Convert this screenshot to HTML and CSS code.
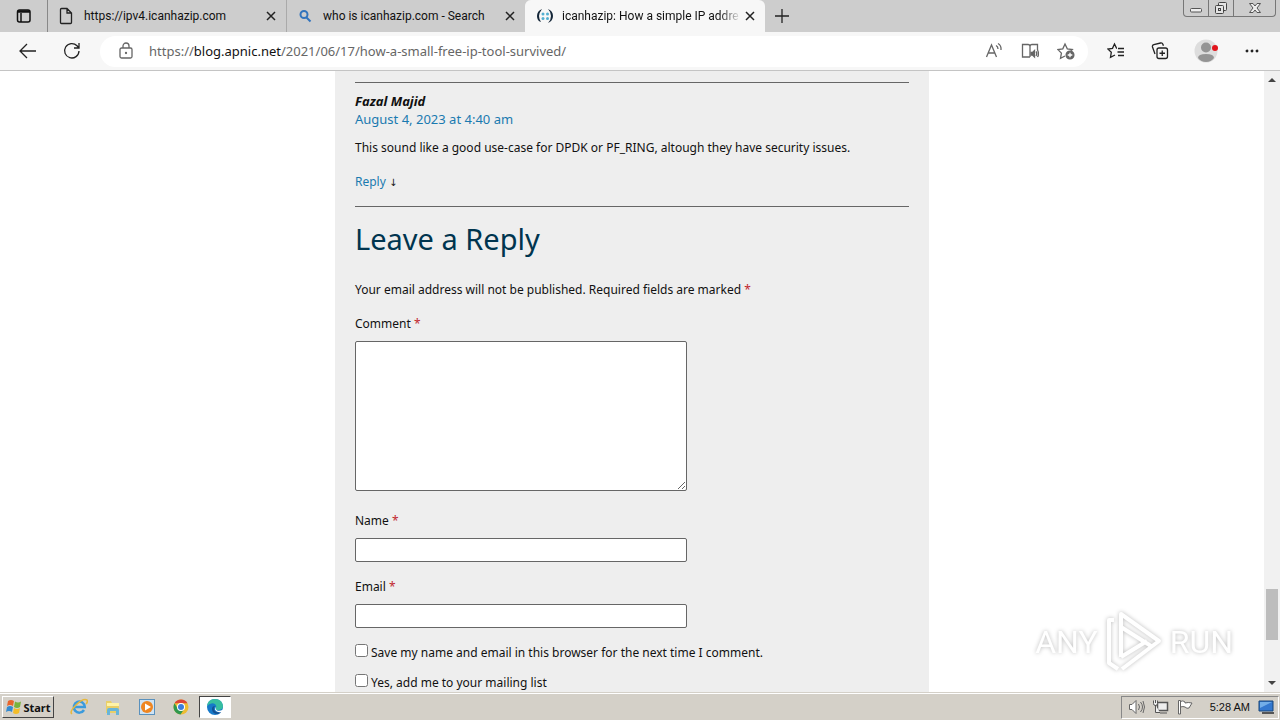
FILE: index.html
```html
<!doctype html>
<html lang="en">
<head>
  <meta charset="utf-8">
  <title>icanhazip: How a simple IP address tool survived</title>
  <meta name="viewport" content="width=device-width, initial-scale=1">
  <link rel="stylesheet" href="styles.css">
</head>

<body>
  <header class="tabbar">
    <button type="button" class="tab-actions" aria-label="Tab actions">
      <svg width="16" height="16" viewBox="0 0 16 16" fill="none" stroke="#111" stroke-width="1.5"><rect x="1.5" y="2" width="12.500" height="12" rx="2"/><path d="M2 3.500h12" stroke-width="2.500"/><path d="M5 5v9"/></svg>
    </button>
    <div class="tab tab-first">
      <svg width="16" height="18" viewBox="0 0 16 18" fill="none" stroke="#222" stroke-width="1.300"><path d="M3.500 1.500h5.500l4.500 4.500v9.500q0 1-1 1h-9q-1 0-1-1v-13q0-1 1-1zM9 1.500v4.500h4.500"/></svg>
      <span class="tab-title">https://ipv4.icanhazip.com</span>
      <button type="button" class="close" aria-label="Close tab"><svg width="10" height="10" viewBox="0 0 10 10"><path d="M1 1l8 8M9 1l-8 8"/></svg></button>
    </div>
    <div class="tab">
      <svg width="16" height="16" viewBox="0 0 16 16" fill="none" stroke="#3274bd" stroke-width="2"><circle cx="7" cy="6.500" r="3.500"/><path d="M9.500 9.500l4 4"/></svg>
      <span class="tab-title">who is icanhazip.com - Search</span>
      <button type="button" class="close" aria-label="Close tab"><svg width="10" height="10" viewBox="0 0 10 10"><path d="M1 1l8 8M9 1l-8 8"/></svg></button>
    </div>
    <div class="tab tab-active">
      <svg width="18" height="16" viewBox="0 0 18 16" fill="none"><path d="M6 1Q1 3 1 8t4 6Q3 11 3 8t3-7zM12 1q3 3 3 7t-3 7q5-2 5-7t-5-7z" fill="#142638"/><g fill="#52aed0"><circle cx="7" cy="6" r="1.500"/><circle cx="11.500" cy="6" r="1.500"/><circle cx="7" cy="10.500" r="1.500"/><circle cx="11.500" cy="10.500" r="1.500"/></g></svg>
      <span class="tab-title tab-fade">icanhazip: How a simple IP addre</span>
      <button type="button" class="close" aria-label="Close tab"><svg width="10" height="10" viewBox="0 0 10 10"><path d="M1 1l8 8M9 1l-8 8"/></svg></button>
    </div>
    <button type="button" class="new-tab" aria-label="New tab">
      <svg width="14" height="14" viewBox="0 0 14 14" stroke="#222" stroke-width="1.300"><path d="M7 0v14M0 7h14"/></svg>
    </button>
    <div class="window-buttons">
      <button type="button" aria-label="Minimize"><svg width="14" height="12" viewBox="0 0 14 12" fill="#eee" stroke="#555"><rect x="1.500" y="6.500" width="11" height="3.500" rx="1"/></svg></button>
      <button type="button" aria-label="Restore"><svg width="14" height="14" viewBox="0 0 14 14" fill="#e4e4e4" stroke="#444"><rect x="4.500" y="1.500" width="8" height="8" rx="1"/><rect x="1.500" y="4.500" width="8" height="8" rx="1"/><rect x="4.500" y="7.500" width="2" height="2"/></svg></button>
      <button type="button" class="window-close" aria-label="Close"><svg width="14" height="12" viewBox="0 0 14 12" fill="#eee" stroke="#555"><path d="M1.500 1.500h3.500l2 2.500 2-2.500h3.500L9 6l3.500 4.500H9L7 8l-2 2.500H1.500L5 6z"/></svg></button>
    </div>
  </header>

  <nav class="toolbar">
    <button type="button" class="tool" aria-label="Back"><svg width="18" height="16" viewBox="0 0 18 16"><path d="M17 8H1.500M8 1L1 8l7 7"/></svg></button>
    <button type="button" class="tool" aria-label="Refresh"><svg width="18" height="18" viewBox="0 0 18 18"><path d="M16 9a7.200 7.200 0 1 1-2-5.200L16 6M16 1v5h-5"/></svg></button>
    <div class="address">
      <svg class="grey-icon" width="16" height="18" viewBox="0 0 16 18"><rect x="2" y="6" width="12" height="10" rx="1.500"/><path d="M5 6V4a3 3 0 0 1 6 0v2"/><circle cx="8" cy="11" r=".5" fill="#666"/></svg>
      <a class="url" href="#">https://<b>blog.apnic.net</b>/2021/06/17/how-a-small-free-ip-tool-survived/</a>
      <button type="button" class="tool grey-icon" aria-label="Read aloud"><svg width="18" height="18" viewBox="0 0 18 18"><path d="M1.500 15L6.500 3l5 12M3.200 11h6.600M11 3.500q2 1 2 3.500M13 1.500q3.500 2 3 6.500"/></svg></button>
      <button type="button" class="tool grey-icon" aria-label="Immersive reader"><svg width="18" height="18" viewBox="0 0 18 18"><path d="M9 15H1.500V2.500H7q2 0 2 2V15M9 4.500q0-2 2-2h5.500V8"/><path d="M10 10.500h1.500l2-2v6.500l-2-2H10z" fill="#666"/><path d="M15 9.500q1.500 2 0 4.500M16.500 8q2 4 0 7"/></svg></button>
      <button type="button" class="tool grey-icon" aria-label="Add to favorites"><svg width="18" height="18" viewBox="0 0 18 18"><path d="M8 14l-4.500 2.300.9-5.200L.8 7.500l5-.7L8 2l2.300 4.800 5 .7-1.500 1.500"/><circle cx="13" cy="13" r="3.900" fill="#666"/><path d="M10.700 13h4.600M13 10.700v4.600" stroke="#fff"/></svg></button>
    </div>
    <button type="button" class="tool" aria-label="Favorites"><svg width="18" height="18" viewBox="0 0 18 18"><path d="M10 6h-.5L7.500 2 5.500 6.300l-4.500.8 3.300 3.200-.8 5L8 13M11 6.500h6M10.500 10H17M11 13.500h6"/></svg></button>
    <button type="button" class="tool" aria-label="Collections"><svg width="18" height="18" viewBox="0 0 18 18"><rect x="6" y="6" width="10.500" height="10.500" rx="2"/><path d="M11.250 8.500v5.500M8.500 11.250H14M4 12L1.500 5q-.5-1.800 1.300-2.300l6.800-1.700q1.700-.3 2.300 1.300l.5 1.500"/></svg></button>
    <button type="button" class="tool profile" aria-label="Profile"><svg width="24" height="24" viewBox="0 0 24 24"><circle cx="12" cy="12" r="11.500" fill="#ddd"/><circle cx="12" cy="8.500" r="5" fill="#949494"/><path d="M4 19q0-4 8-4t8 4q-3 4-8 4t-8-4z" fill="#949494"/><circle cx="21" cy="9" r="3" fill="#e1141c"/></svg></button>
    <button type="button" class="tool" aria-label="Settings and more"><svg width="16" height="6" viewBox="0 0 16 6"><g fill="#222"><circle cx="3" cy="3" r=".8"/><circle cx="8" cy="3" r=".8"/><circle cx="13" cy="3" r=".8"/></g></svg></button>
  </nav>

  <div class="viewport">
    <main class="page">
      <article class="comments">
        <section class="comment">
          <cite>Fazal Majid</cite>
          <a class="comment-date" href="#">August 4, 2023 at 4:40 am</a>
          <p>This sound like a good use-case for DPDK or PF_RING, altough they have security issues.</p>
          <div class="reply"><a href="#">Reply</a> <span class="arrow">↓</span></div>
        </section>
        <form class="respond">
          <h3>Leave a Reply</h3>
          <p class="notes">Your email address will not be published. Required fields are marked <span class="required">*</span></p>
          <label for="comment">Comment <span class="required">*</span></label>
          <textarea id="comment" name="comment"></textarea>
          <label for="author">Name <span class="required">*</span></label>
          <input type="text" id="author" name="author">
          <label for="email">Email <span class="required">*</span></label>
          <input type="text" id="email" name="email">
          <div class="check">
            <input type="checkbox" id="consent">
            <label for="consent">Save my name and email in this browser for the next time I comment.</label>
          </div>
          <div class="check">
            <input type="checkbox" id="mailing">
            <label for="mailing">Yes, add me to your mailing list</label>
          </div>
        </form>
      </article>
    </main>
    <div class="scrollbar">
      <svg width="8" height="4" viewBox="0 0 8 4"><path d="M0 4l4-4 4 4z" fill="#444"/></svg>
      <div class="thumb"></div>
      <svg width="8" height="4" viewBox="0 0 8 4"><path d="M0 0h8l-4 4z" fill="#444"/></svg>
    </div>
    <div class="watermark">
      <span>ANY</span>
      <svg width="60" height="66" viewBox="0 0 60 66" fill="none" stroke="#fff" stroke-width="4" stroke-linejoin="round"><path d="M17 48V5l38 27L18 60M17 18l30 19M17 48l26-16M10 11H5v43l9 6" /></svg>
      <span>RUN</span>
    </div>
  </div>

  <footer class="taskbar">
    <button type="button" class="start">
      <svg width="17" height="16" viewBox="0 0 17 16"><path d="M3 2q3-2 6 0L8 7Q5 5 2 7z" fill="#e8652b"/><path d="M10 2.500q3 2 6 0L15 8q-3 2-6 0z" fill="#79b33b"/><path d="M2 8q3-2 6 0l-1 5q-3-2-6 0z" fill="#338ad0"/><path d="M9 9q3 2 6 0l-1 5q-3 2-6 0z" fill="#f4bd28"/></svg>
      Start
    </button>
    <div class="quick">
      <button type="button" aria-label="Internet Explorer"><svg width="18" height="18" viewBox="0 0 18 18" fill="none"><path d="M14 12a5.500 5.500 0 1 1 .8-3H5" stroke="#3b9bdc" stroke-width="2.500"/><path d="M2 16Q-1 14 6 7T17 2q1 2-1 4" stroke="#e7b83b" stroke-width="1.500"/></svg></button>
      <button type="button" aria-label="Explorer"><svg width="18" height="18" viewBox="0 0 18 18"><path d="M2 3h5l1 2h7v10H2z" fill="#e9cf69"/><path d="M3 5h12v3H3z" fill="#fff3a8"/><path d="M3 17v-5q0-2 2-2h8q2 0 2 2v5h-3v-4H6v4z" fill="#69b5d9"/></svg></button>
      <button type="button" aria-label="Media Player"><svg width="18" height="18" viewBox="0 0 18 18"><rect x="1.500" y="1.500" width="15" height="15" fill="#cfe3f4" stroke="#5a91bd"/><circle cx="9" cy="9" r="6" fill="#ef8622"/><path d="M7 5.500v7l6-3.500z" fill="#fff"/></svg></button>
      <button type="button" aria-label="Chrome"><svg width="18" height="18" viewBox="0 0 18 18"><circle cx="9" cy="9" r="7.500" fill="#edbc32"/><path d="M2.500 5.250a7.500 7.500 0 0 1 13 0H9z" fill="#dc4437"/><path d="M2.500 5.250A7.500 7.500 0 0 0 8.500 16.500L12.200 11 9 12.500 5.700 10.500z" fill="#30984f"/><circle cx="9" cy="9" r="4" fill="#fff"/><circle cx="9" cy="9" r="3" fill="#3b7ddd"/></svg></button>
      <button type="button" class="current" aria-label="Edge"><svg width="18" height="18" viewBox="0 0 18 18"><circle cx="9" cy="9" r="8" fill="#1679c9"/><path d="M1 8Q2 1 9 1t8 7q0 4-5 4-3 0-2-2 1-2-1-4-4-2-8 2z" fill="#37bea0"/><path d="M9 8q-3 3 1 6 4 1 6-1-1 2-4 3-6 0-6-5 0-3 3-3z" fill="#144f91"/><path d="M10 9q-1 2 1 3.500 3 1 6-1l1 2-2 1q-6 0-7-3 0-2 1-2.500z" fill="#fff"/></svg></button>
    </div>
    <div class="tray">
      <svg width="18" height="16" viewBox="0 0 18 16" fill="#fff" stroke="#666"><path d="M1.500 5.500H4l4-4v13l-4-4H1.500z"/><path d="M10.500 5q2 3 0 6M12.500 3q4 5 0 10M15 2q3 6 0 12" fill="none"/></svg>
      <svg width="18" height="16" viewBox="0 0 18 16" fill="#eee" stroke="#555"><rect x="5.500" y="3.500" width="10" height="8" stroke-width="1.500"/><path d="M8 14h7M3.500 6v7.500H8M1.500 1.500v3q0 2 2 2t2-2v-3M3.500 1v3"/></svg>
      <svg width="18" height="16" viewBox="0 0 18 16" fill="#fff" stroke="#666"><path d="M2.500 15V1.500h2V15zM4.500 2.500Q7 1 9 3v1q3-1 7 0l-3 5q-2 1-4-1-2-1-4.500 0z"/></svg>
      <time>5:28 AM</time>
      <svg width="18" height="16" viewBox="0 0 18 16"><path d="M1 2h14v10H1z" fill="#3378cf" stroke="#174479"/><path d="M2 3h12L2 9z" fill="#72aee8"/><path d="M4 14h12" stroke="#555" stroke-width="2"/></svg>
    </div>
  </footer>
</body>
</html>
```
FILE: styles.css
```css
* {
  box-sizing: border-box;
}

body {
  display: flex;
  flex-direction: column;
  height: 100vh;
  margin: 0;
  overflow: hidden;
  background: #fff;
  color: #111;
  font-family: "Noto Sans", sans-serif;
  font-size: 12px;
}

button {
  display: flex;
  align-items: center;
  justify-content: center;
  padding: 0;
  border: 0;
  background: none;
  font: inherit;
  color: inherit;
}

svg {
  display: block;
  flex: none;
}

a {
  color: #1a7ab0;
  text-decoration: none;
}

/* tab strip */
.tabbar {
  display: flex;
  flex: none;
  height: 32px;
  background: #cdcdcd;
  font-family: Roboto, sans-serif;
}

.tab-actions {
  width: 47px;
}

.tab {
  display: flex;
  align-items: center;
  width: 239px;
  padding: 0 10px;
  border-left: 1px solid #aaa;
}

.tab-first {
  border-color: #888;
}

.tab-active {
  width: 240px;
  background: #f7f7f7;
  border-radius: 6px 6px 0 0;
  border-color: #f7f7f7;
}

.tab-title {
  flex: 1;
  min-width: 0;
  margin: 0 8px 0 10px;
  overflow: hidden;
  white-space: nowrap;
}

.tab-fade {
  margin: 0 4px 0 8px;
  -webkit-mask-image: linear-gradient(to right, #000 88%, transparent);
  mask-image: linear-gradient(to right, #000 88%, transparent);
}

.close svg {
  stroke: #222;
  stroke-width: 1.5;
}

.new-tab {
  width: 34px;
}

.window-buttons {
  display: flex;
  height: 17px;
  margin-left: auto;
  margin-right: 4px;
  border: 1px solid #777;
  border-top: 0;
  border-radius: 0 0 4px 4px;
}

.window-buttons button {
  width: 25px;
  border-right: 1px solid #777;
}

.window-buttons .window-close {
  width: 41px;
  border: 0;
}

/* toolbar */
.toolbar {
  display: flex;
  flex: none;
  align-items: center;
  height: 39px;
  padding: 0 6px;
  background: #f7f7f7;
  border-bottom: 1px solid #c4c4c4;
}

.tool {
  width: 44px;
  height: 30px;
}

.tool svg,
.grey-icon {
  fill: none;
  stroke: #222;
  stroke-width: 1.3;
}

.tool.grey-icon {
  width: 36px;
}

.grey-icon,
.grey-icon svg {
  stroke: #666;
}

.tool.profile {
  width: 48px;
}

.profile svg {
  stroke: none;
}

.address {
  display: flex;
  flex: 1;
  align-items: center;
  height: 31px;
  margin: 0 6px;
  padding: 0 4px 0 18px;
  border-radius: 16px;
  background: #fff;
}

.url {
  flex: 1;
  margin-left: 15px;
  color: #666;
  font-size: 13px;
}

.url b {
  color: #111;
  font-weight: normal;
}

/* page */
.viewport {
  position: relative;
  display: flex;
  flex: 1;
  min-height: 0;
}

.page {
  flex: 1;
  overflow: hidden;
}

.comments {
  max-width: 594px;
  height: 100%;
  margin: 0 auto;
  padding: 11px 20px 0;
  background: #eee;
  line-height: 18px;
}

.comment {
  padding: 9px 0 14px;
  border-top: 1px solid #666;
  border-bottom: 1px solid #666;
}

.comment cite {
  display: block;
  font-size: 13px;
  font-weight: bold;
}

.comment-date {
  display: block;
  font-size: 13px;
}

.comment p {
  margin: 11px 0 16px;
}

.arrow {
  font-family: "DejaVu Sans", sans-serif;
  font-size: 10px;
}

.respond h3 {
  margin: 14px 0 24px;
  color: #00354f;
  font-size: 29px;
  font-weight: normal;
  line-height: 36px;
}

.respond .notes {
  margin: 0 0 16px;
}

.respond > label {
  display: block;
  margin-bottom: 8px;
}

.required {
  color: #c1272d;
}

.respond textarea,
.respond input[type="text"] {
  display: block;
  width: 332px;
  max-width: 100%;
  border: 1px solid #666;
  border-radius: 2px;
  background: #fff;
}

.respond textarea {
  height: 150px;
  margin-bottom: 21px;
}

.respond input[type="text"] {
  height: 24px;
  margin-bottom: 16px;
}

.check {
  display: flex;
  gap: 3px;
  height: 30px;
}

.check input {
  width: 13px;
  height: 13px;
  margin: 0;
}

.scrollbar {
  display: flex;
  flex-direction: column;
  align-items: center;
  width: 16px;
  padding: 7px 2px;
  background: #f1f1f1;
}

.thumb {
  width: 12px;
  height: 51px;
  margin-top: auto;
  margin-bottom: 41px;
  background: #bdbdbd;
}

.watermark {
  position: absolute;
  right: 47px;
  bottom: 17px;
  display: flex;
  align-items: center;
  gap: 6px;
  color: #fff;
  font-family: Roboto, sans-serif;
  font-size: 32px;
  filter: drop-shadow(0 0 2px #bbb);
  pointer-events: none;
}

/* taskbar */
.taskbar {
  display: flex;
  flex: none;
  align-items: center;
  height: 28px;
  padding: 2px 1px 1px 2px;
  border-top: 1px solid #d4d0c8;
  background: #d4d0c8;
  box-shadow: inset 0 1px #fff;
}

.start {
  gap: 1px;
  width: 52px;
  height: 22px;
  border: 1px solid;
  border-color: #fff #444 #444 #fff;
  font-size: 11px;
  font-weight: bold;
}

.quick {
  display: flex;
  gap: 2px;
  margin-left: 9px;
}

.quick button {
  width: 32px;
  height: 22px;
}

.quick .current {
  border: 1px solid;
  border-color: #444 #fff #fff #444;
  background: #fff;
}

.tray {
  display: flex;
  align-items: center;
  gap: 6px;
  height: 23px;
  margin-left: auto;
  padding: 0 2px 0 6px;
  border: 1px solid;
  border-color: #888 #fff #fff #888;
  font-family: "Liberation Sans", sans-serif;
  font-size: 11px;
}

.tray time {
  margin: 0 2px 0 10px;
}
```
